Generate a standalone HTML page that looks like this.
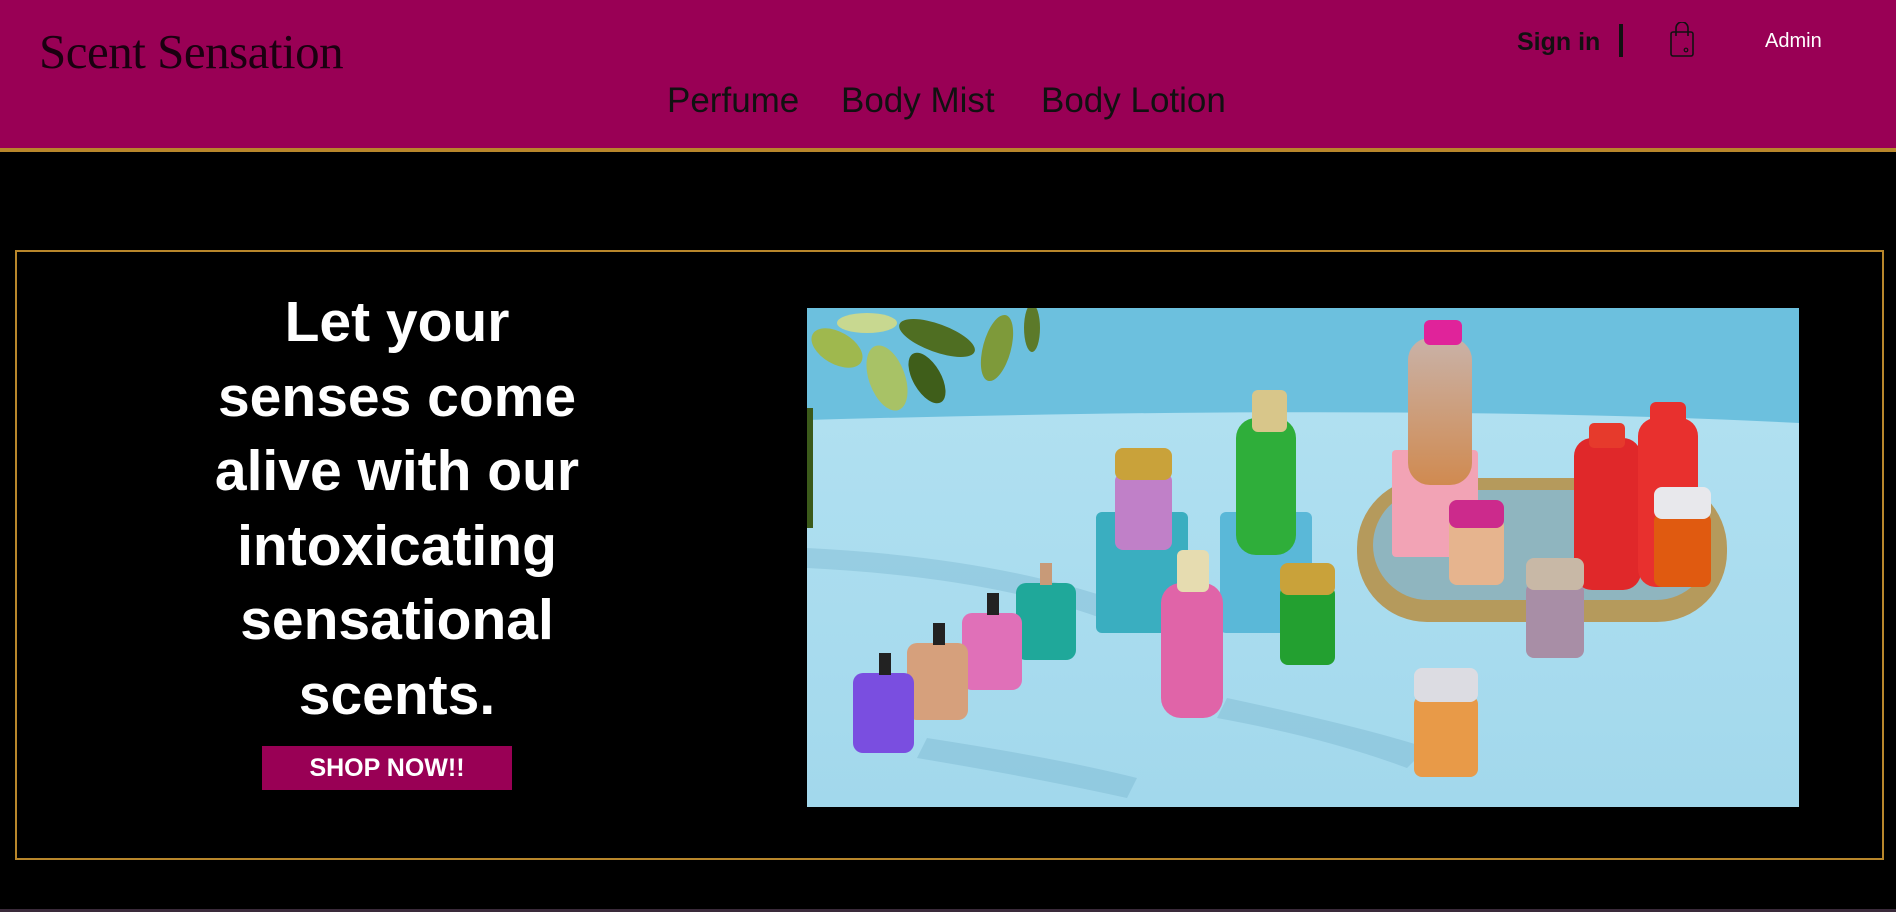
<!DOCTYPE html>
<html><head><meta charset="utf-8"><style>
*{margin:0;padding:0;box-sizing:border-box}
body{width:1896px;height:912px;background:#000;overflow:hidden;font-family:"Liberation Sans",sans-serif;position:relative}
header{position:absolute;left:0;top:0;width:1896px;height:152px;background:#990055;border-bottom:4px solid #b8862b}
.logo{position:absolute;left:39px;top:23px;font-family:"Liberation Serif",serif;font-size:49px;color:#1a0010;letter-spacing:-0.5px;font-weight:normal}
.nav{position:absolute;top:81px;font-size:35px;color:#111}
.signin{position:absolute;left:1517px;top:28px;font-size:25px;font-weight:bold;color:#111}
.sep{position:absolute;left:1619px;top:24px;width:4px;height:33px;background:#111}
.admin{position:absolute;left:1765px;top:30px;font-size:20px;color:#fff}
.frame{position:absolute;left:15px;top:250px;width:1869px;height:610px;border:2px solid #b8862b}
.h{position:absolute;left:147px;width:500px;top:285px;text-align:center;color:#fff;font-size:57px;font-weight:bold;line-height:74.6px}
.btn{position:absolute;left:262px;top:746px;width:250px;height:44px;background:#990055;color:#fff;font-size:25px;font-weight:bold;text-align:center;line-height:44px}
svg.img{position:absolute;left:807px;top:308px}
.bl{position:absolute;left:0;top:909px;width:1896px;height:3px;background:#3a2a3a}
</style></head><body>
<header>
<div class="logo">Scent Sensation</div>
<div class="nav" style="left:667px">Perfume</div>
<div class="nav" style="left:841px">Body Mist</div>
<div class="nav" style="left:1041px">Body Lotion</div>
<div class="signin">Sign in</div>
<div class="sep"></div>
<svg style="position:absolute;left:1668px;top:22px" width="28" height="36" viewBox="0 0 28 36"><rect x="3" y="10" width="22" height="24" rx="2" fill="none" stroke="#111" stroke-width="1.6"/><path d="M8 14V6a6 6 0 0 1 12 0v8" fill="none" stroke="#111" stroke-width="1.6"/><circle cx="18" cy="28" r="1.8" fill="none" stroke="#111" stroke-width="1.2"/></svg>
<div class="admin">Admin</div>
</header>
<div class="frame"></div>
<div class="h">Let your<br>senses come<br>alive with our<br>intoxicating<br>sensational<br>scents.</div>
<div class="btn">SHOP NOW!!</div>
<svg class="img" width="992" height="499" viewBox="0 0 992 499">
<defs>
<linearGradient id="fl" x1="0" y1="0" x2="0" y2="1"><stop offset="0" stop-color="#b4e2f2"/><stop offset="1" stop-color="#a2d8ec"/></linearGradient>
<linearGradient id="am" x1="0" y1="0" x2="0" y2="1"><stop offset="0" stop-color="#c9b2a8"/><stop offset="1" stop-color="#d08a50"/></linearGradient>
</defs>
<rect width="992" height="499" fill="url(#fl)"/>
<path d="M0 0H992V115Q600 95 0 112Z" fill="#6cc0de"/>
<g fill="#6aa8c4" opacity=".3"><path d="M0 240Q200 250 330 300L320 320Q200 270 0 260Z"/><path d="M120 430Q250 450 330 470L320 490Q230 470 110 450Z"/><path d="M420 390Q560 420 620 440L600 460Q520 430 410 410Z"/></g>
<g>
<ellipse cx="30" cy="40" rx="28" ry="16" fill="#9fb84e" transform="rotate(30 30 40)"/>
<ellipse cx="80" cy="70" rx="18" ry="34" fill="#a8c266" transform="rotate(-20 80 70)"/>
<ellipse cx="130" cy="30" rx="40" ry="14" fill="#4f6e22" transform="rotate(20 130 30)"/>
<ellipse cx="120" cy="70" rx="14" ry="28" fill="#3f5e1a" transform="rotate(-30 120 70)"/>
<ellipse cx="190" cy="40" rx="14" ry="34" fill="#7e9a3a" transform="rotate(15 190 40)"/>
<ellipse cx="60" cy="15" rx="30" ry="10" fill="#c8d890"/>
<ellipse cx="225" cy="20" rx="8" ry="24" fill="#5c7a2a"/>
<rect x="0" y="100" width="6" height="120" fill="#3b5a1a"/>
</g>
<rect x="289" y="204" width="92" height="121" rx="6" fill="#3aaec0"/>
<rect x="413" y="204" width="92" height="121" rx="6" fill="#5ab8d8"/>
<rect x="550" y="170" width="370" height="144" rx="70" fill="#b59a5c"/>
<rect x="566" y="182" width="338" height="110" rx="55" fill="#8fb5bf"/>
<rect x="585" y="142" width="86" height="107" rx="4" fill="#f2a3b5"/>
<rect x="601" y="30" width="64" height="147" rx="22" fill="url(#am)"/><rect x="617" y="12" width="38" height="25" rx="6" fill="#e0239a"/>
<rect x="767" y="130" width="67" height="152" rx="18" fill="#e0282a"/><rect x="782" y="115" width="36" height="25" rx="5" fill="#e63a2c"/>
<rect x="831" y="110" width="60" height="169" rx="18" fill="#e8302e"/><rect x="843" y="94" width="36" height="25" rx="6" fill="#e8302e"/>
<rect x="847" y="205" width="57" height="74" rx="8" fill="#e05a10"/><rect x="847" y="179" width="57" height="32" rx="8" fill="#e8e8ec"/>
<rect x="642" y="210" width="55" height="67" rx="8" fill="#e6b48e"/><rect x="642" y="192" width="55" height="28" rx="8" fill="#cc2a8c"/>
<rect x="429" y="110" width="60" height="137" rx="20" fill="#2fae3a"/><rect x="445" y="82" width="35" height="42" rx="6" fill="#d8c68a"/>
<rect x="308" y="165" width="57" height="77" rx="8" fill="#c080c8"/><rect x="308" y="140" width="57" height="32" rx="8" fill="#c9a23a"/>
<rect x="354" y="275" width="62" height="135" rx="20" fill="#e064a8"/><rect x="370" y="242" width="32" height="42" rx="6" fill="#e6dcb0"/>
<rect x="473" y="278" width="55" height="79" rx="8" fill="#23a030"/><rect x="473" y="255" width="55" height="32" rx="8" fill="#c9a23a"/>
<rect x="719" y="275" width="58" height="75" rx="8" fill="#a88ea6"/><rect x="719" y="250" width="58" height="32" rx="8" fill="#c8b8a6"/>
<rect x="607" y="388" width="64" height="81" rx="8" fill="#e89a48"/><rect x="607" y="360" width="64" height="34" rx="8" fill="#dcdce2"/>
<rect x="209" y="275" width="60" height="77" rx="10" fill="#1fa89a"/><rect x="233" y="255" width="12" height="22" fill="#c89a78"/>
<rect x="155" y="305" width="60" height="77" rx="10" fill="#e070b8"/><rect x="180" y="285" width="12" height="22" fill="#222"/>
<rect x="100" y="335" width="61" height="77" rx="10" fill="#d6a07c"/><rect x="126" y="315" width="12" height="22" fill="#222"/>
<rect x="46" y="365" width="61" height="80" rx="10" fill="#7a4ee0"/><rect x="72" y="345" width="12" height="22" fill="#222"/>
</svg>
<div class="bl"></div>
</body></html>
